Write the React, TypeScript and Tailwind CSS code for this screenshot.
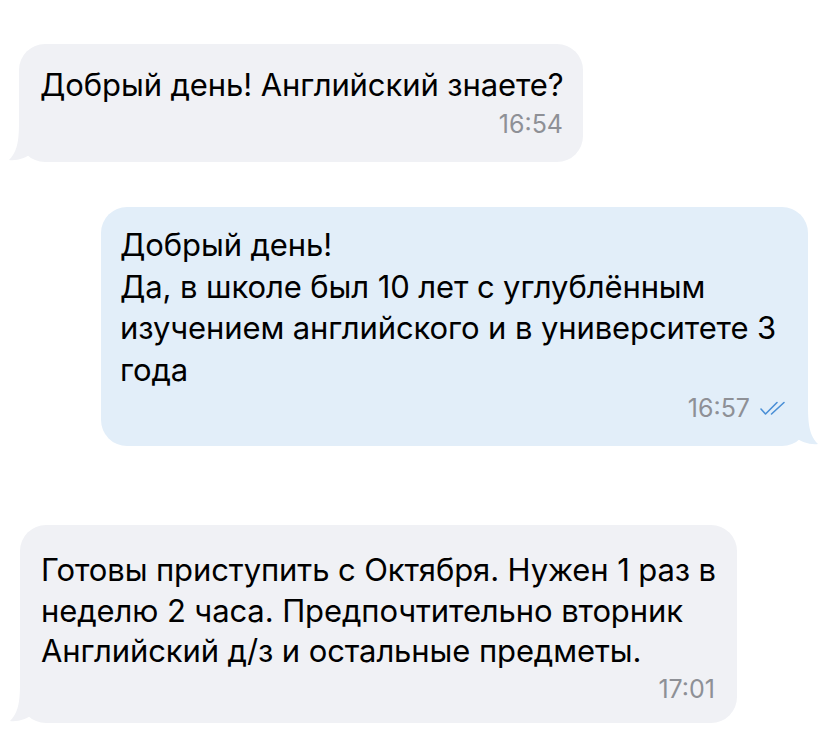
import React from 'react';

const Tail: React.FC<{ side: 'left' | 'right'; color: string }> = ({ side, color }) => (
  <svg
    className={`absolute bottom-0 ${side === 'left' ? '-left-[10px]' : '-right-[10px] -scale-x-100'}`}
    width="40"
    height="42"
    viewBox="0 0 40 42"
  >
    <path d="M10 2 C10 22 8 32 0 40 C8 41 17 38 23 33 L32 18 Z" fill={color} />
  </svg>
);

const DoubleCheck = () => (
  <svg width="29" height="15" viewBox="0 0 29 15" className="text-[#4a8fd6]">
    <path d="M2 8 L6.5 13 L18 1.5" fill="none" stroke="currentColor" strokeWidth="1.6" strokeLinecap="round" strokeLinejoin="round" />
    <path d="M12.5 13 L25 1.5" fill="none" stroke="currentColor" strokeWidth="1.6" strokeLinecap="round" />
  </svg>
);

export default function App() {
  const incoming = '#f0f1f5';
  const outgoing = '#e2eef9';

  return (
    <div
      className="w-[828px] h-[755px] bg-white overflow-hidden flex flex-col pt-[44px]"
      style={{ fontFamily: 'Inter, "Noto Sans", sans-serif' }}
    >
      {/* incoming 1 */}
      <div className="relative ml-[19px] w-[564px] h-[118px] rounded-[26px] bg-[#f0f1f5] pl-[21px] pr-[20px] pt-[21px]">
        <Tail side="left" color={incoming} />
        <p className="relative text-[31px] leading-[40px] text-black tracking-[-0.1px] whitespace-nowrap">Добрый день! Английский знаете?</p>
        <div className="relative flex justify-end mt-[5px] text-[25px] leading-[28px] text-[#8e9096]">16:54</div>
      </div>

      {/* outgoing */}
      <div className="relative ml-[101px] mt-[45px] w-[707px] h-[239px] rounded-[26px] bg-[#e2eef9] pl-[19px] pr-[20px] pt-[17px]">
        <Tail side="right" color={outgoing} />
        <p className="relative text-[31px] leading-[41.5px] text-black tracking-[-0.1px] whitespace-nowrap">
          Добрый день!
          <br />
          Да, в школе был 10 лет с углублённым
          <br />
          изучением английского и в университете 3
          <br />
          года
        </p>
        <div className="relative flex justify-end items-center gap-[9px] mt-[4px] text-[25px] leading-[28px] text-[#8e9096]">
          <span>16:57</span>
          <DoubleCheck />
        </div>
      </div>

      {/* incoming 2 */}
      <div className="relative ml-[20px] mt-[79px] w-[717px] h-[198px] rounded-[26px] bg-[#f0f1f5] pl-[21px] pr-[22px] pt-[25px]">
        <Tail side="left" color={incoming} />
        <p className="relative text-[31px] leading-[40.5px] text-black tracking-[-0.1px] whitespace-nowrap">
          Готовы приступить с Октября. Нужен 1 раз в
          <br />
          неделю 2 часа. Предпочтительно вторник
          <br />
          Английский д/з и остальные предметы.
        </p>
        <div className="relative flex justify-end mt-[3px] text-[25px] leading-[28px] text-[#8e9096]">17:01</div>
      </div>
    </div>
  );
}
